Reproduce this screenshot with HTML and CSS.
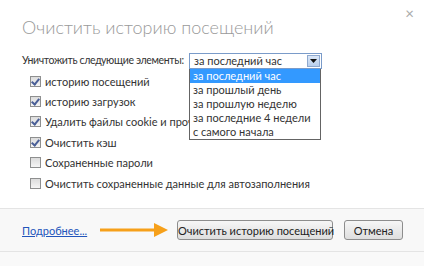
FILE: index.html
```html
<!DOCTYPE html>
<html lang="ru">
  <head>
    <meta charset="UTF-8" />
    <title>Очистить историю посещений</title>
    <link rel="stylesheet" href="styles.css">
  </head>
  <body>
    <div class="dialog">
      <div class="head">
        <div class="title">Очистить историю посещений</div>
        <span class="close">&times;</span>
      </div>

      <div class="content">
        <div class="period">
          <span class="period-label">Уничтожить следующие элементы:</span>
          <div class="select">
            <div class="select-box">
              <span>за последний час</span>
              <span class="select-btn">
                <svg width="7" height="4" viewBox="0 0 7 4"><path d="M0 0h7L3.5 4z" fill="#111" /></svg>
              </span>
            </div>
            <ul class="options">
              <li class="active">за последний час</li>
              <li>за прошлый день</li>
              <li>за прошлую неделю</li>
              <li>за последние 4 недели</li>
              <li>с самого начала</li>
            </ul>
          </div>
        </div>

        <label class="check"><span class="box on"></span>историю посещений</label>
        <label class="check"><span class="box on"></span>историю загрузок</label>
        <label class="check"><span class="box on"></span><span class="cut">Удалить файлы cookie и прочие данные</span></label>
        <label class="check"><span class="box on"></span>Очистить кэш</label>
        <label class="check"><span class="box"></span>Сохраненные пароли</label>
        <label class="check"><span class="box"></span>Очистить сохраненные данные для автозаполнения</label>
      </div>

      <div class="footer">
        <a href="#" class="more">Подробнее...</a>
        <svg class="arrow" width="70" height="16" viewBox="0 0 70 16">
          <path d="M0 8h60" stroke="#f6a01a" stroke-width="3" />
          <path d="M54 1l14 7-14 7z" fill="#f6a01a" />
        </svg>
        <button type="button" class="btn clear">Очистить историю посещений</button>
        <button type="button" class="btn cancel">Отмена</button>
      </div>
      <div class="bottom"></div>
    </div>
  </body>
</html>
```

FILE: styles.css
```css
body {
  margin: 0;
  padding: 0;
  background: white;
  font-family: Lato, "Open Sans", sans-serif;
  font-size: 11px;
  color: #333;
}
.dialog {
  width: 424px;
  height: 266px;
  overflow: hidden;
}
.head {
  height: 46px;
  padding: 0 0 0 22px;
  display: flex;
  justify-content: space-between;
}
.title {
  font-size: 18px;
  font-weight: 300;
  color: #9a9a9a;
  padding-top: 16px;
}
.close {
  color: #aaa;
  font-size: 15px;
  padding: 4px 10px 0 0;
}
.content {
  padding: 0 0 0 22px;
  height: 162px;
}
.period {
  display: flex;
  align-items: flex-start;
  height: 25px;
}
.period-label {
  width: 167px;
  padding-top: 8px;
  white-space: nowrap;
  font-size: 10.5px;
  letter-spacing: -0.35px;
}
.select {
  position: relative;
  margin-top: 7px;
}
.select-box {
  width: 127px;
  height: 14px;
  border: 1px solid #7a9bc9;
  background: white;
  display: flex;
  justify-content: space-between;
  align-items: center;
  padding-left: 4px;
  line-height: 14px;
}
.select-btn {
  width: 13px;
  height: 12px;
  margin-right: 1px;
  background: linear-gradient(#dbe7f7, #b9cfec);
  border: 1px solid #8fa9cf;
  box-sizing: border-box;
  display: flex;
  align-items: center;
  justify-content: center;
}
.options {
  position: absolute;
  top: 16px;
  left: 0;
  width: 132px;
  margin: 0;
  padding: 0;
  list-style: none;
  background: white;
  border: 1px solid #646464;
  border-top: none;
  box-sizing: border-box;
  z-index: 2;
}
.options li {
  height: 14px;
  line-height: 14px;
  padding-left: 3px;
  white-space: nowrap;
}
.options li.active {
  background: #3399ff;
  color: white;
}
.check {
  display: flex;
  align-items: center;
  height: 20.4px;
  padding-left: 8px;
  white-space: nowrap;
}
.cut {
  width: 144px;
  overflow: hidden;
}
.box {
  width: 9px;
  height: 9px;
  border: 1px solid #8e8f8f;
  background: linear-gradient(#dcdcdc, #f5f5f5);
  margin-right: 4px;
  position: relative;
}
.box.on::after {
  content: "";
  position: absolute;
  left: 2px;
  top: 0px;
  width: 3px;
  height: 6px;
  border: solid #4a5f97;
  border-width: 0 2px 2px 0;
  transform: rotate(40deg);
}
.footer {
  border-top: 1px solid #e4e4e4;
  border-bottom: 1px solid #e4e4e4;
  background: #f8f8f8;
  height: 42px;
  display: flex;
  align-items: center;
  padding: 0 0 0 22px;
}
.more {
  color: #2255bb;
  text-decoration: underline;
  width: 78px;
}
.arrow {
  margin-right: 7px;
}
.btn {
  font-family: Lato, "Open Sans", sans-serif;
  font-size: 11px;
  color: #222;
  height: 20px;
  padding: 0;
  border: 1px solid #8d8d8d;
  border-radius: 3px;
  background: linear-gradient(#f6f6f6, #dedede);
  white-space: nowrap;
}
.btn.clear {
  width: 156px;
  margin-right: 11px;
}
.btn.cancel {
  width: 59px;
}
.bottom {
  background: #f9f9f9;
  height: 20px;
}
```
